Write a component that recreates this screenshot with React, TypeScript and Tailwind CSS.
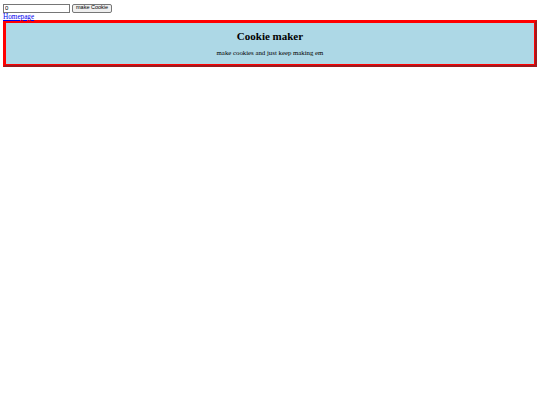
export default function App() {
  return (
    <div className="p-[3px] font-['Liberation_Serif',serif] text-black bg-white min-h-[405px]">
      {/* Cookie form */}
      <div className="flex items-center gap-[2px] h-[10px]">
        <input
          type="text"
          defaultValue="0"
          className="w-[67px] h-[9px] border border-[#767676] px-[1px] text-[6px] leading-none font-['Liberation_Sans',sans-serif] outline-none"
        />
        <button className="h-[9px] px-[3px] bg-[#efefef] border border-[#767676] rounded-[2px] text-[5.5px] leading-none font-['Liberation_Sans',sans-serif]">
          make Cookie
        </button>
      </div>
      <a href="#" className="block text-[7.2px] leading-[8px] text-[#0000ee] underline w-max">
        Homepage
      </a>
      <div className="mt-[-1px] border-t-2 border-l-2 border-b-2 border-r-2 border-t-[#ff0000] border-l-[#ff0000] border-b-[#9e1a1f] border-r-[#9e1a1f]">
        <div className="h-[43px] bg-[#add8e6] border border-[#ff0000] flex flex-col items-center">
          <h2 className="mt-[7px] text-[11px] leading-[12px] font-bold">Cookie maker</h2>
          <p className="mt-[7px] text-[6.8px] leading-[8px]">make cookies and just keep making em</p>
        </div>
      </div>
    </div>
  );
}
